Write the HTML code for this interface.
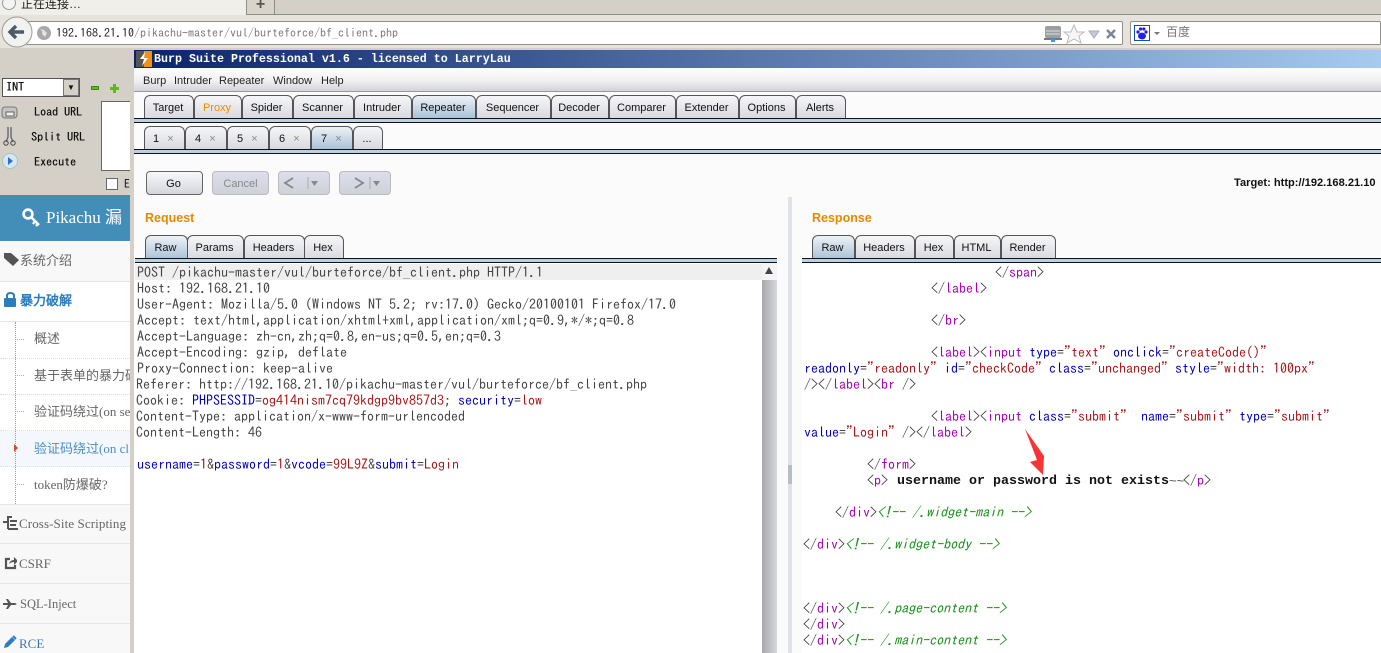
<!DOCTYPE html>
<html><head><meta charset="utf-8"><style>
html,body{margin:0;padding:0;width:1381px;height:653px;overflow:hidden;background:#d4d0c8}
body{position:relative;font-family:"Liberation Sans","WenQuanYi Zen Hei",sans-serif}
div,span.a{box-sizing:border-box}
.a{position:absolute}
.t{position:absolute;white-space:pre;font:14px/16px "IPAGothic","Liberation Mono",monospace;color:#444}
.b{color:#0000c0}.r{color:#a81818}.m{color:#a400b8}.g{color:#149014;font-style:italic}
.k{color:#111;font:bold 13.33px/16px "Liberation Mono",monospace}
.tab{position:absolute;top:0;height:100%;border:1px solid #555;border-bottom:0;border-radius:6px 6px 0 0;background:linear-gradient(#f6f6f8,#d8dae0);font-size:11px;color:#111;text-align:center;padding-right:2px}
.sel{background:linear-gradient(#eef2f6,#a9c2d8)}
.btn{position:absolute;top:171px;height:24px;border-radius:4px;font-size:11px;text-align:center;line-height:24px}
.s{position:absolute;left:0;width:130px;font:13px/38px "Liberation Serif","WenQuanYi Zen Hei",serif;color:#666;white-space:nowrap;overflow:hidden}
.h{font:12px/14px "IPAGothic","Liberation Mono",monospace;color:#111;position:absolute;white-space:pre;text-shadow:.3px 0 0 #111}
.d{position:absolute;left:17px;width:7px;height:1px;border-top:1px dotted #9db6d0;z-index:3}
</style></head><body>

<!-- browser top -->
<div class="a" style="left:0;top:0;width:1381px;height:15px;background:#d4d0c8;border-bottom:1px solid #8e8e88"></div>
<div class="a" style="left:0;top:0;width:246px;height:15px;background:#f1efe9"></div>
<div class="a" style="left:2px;top:-4px;width:14px;height:14px;border:1px solid #999;border-radius:50%;background:#f4f4f4"></div>
<div class="a" style="left:21px;top:-3px;font-size:12px;line-height:14px;color:#222">正在连接…</div>
<div class="a" style="left:246px;top:0;width:29px;height:15px;background:#d8d4ca;border:1px solid #8e8e88;border-top:0;text-align:center;font:bold 16px/9px 'Liberation Sans';color:#555">+</div>
<div class="a" style="left:0;top:15px;width:1381px;height:33px;background:#e6e3dc"></div>
<div class="a" style="left:26px;top:21px;width:1097px;height:24px;background:#fff;border:1px solid #8f8f8b;border-radius:2px"></div>
<svg class="a" style="left:1px;top:16px" width="34" height="34"><circle cx="16" cy="16" r="15" fill="#f2f2f0" stroke="#9a9a98"/><path d="M9 16h14M15 10l-6 6 6 6" fill="none" stroke="#4c5a6a" stroke-width="3.4"/></svg>
<svg class="a" style="left:37px;top:26px" width="14" height="14"><circle cx="7" cy="7" r="7" fill="#a8a8a8"/><path d="M3 3q3 2 2 5l3 3 2-4-3-3zM9 1l3 4" fill="#e4e4e4"/></svg>
<div class="t" style="left:56px;top:25px;font-size:12px;color:#222">192.168.21.10<span style="color:#777">/pikachu-master/vul/burteforce/bf_client.php</span></div>
<svg class="a" style="left:1044px;top:24px" width="80" height="20"><rect x="1" y="2" width="16" height="12" rx="2" fill="#9aa0a0"/><path d="M2 7h14M2 10h14" stroke="#dde"/><rect x="0" y="14" width="18" height="2" fill="#778"/><rect x="7" y="15" width="4" height="3" fill="#39f"/><path d="M30 1l3 7h7l-5 4 2 7-7-4-7 4 2-7-5-4h7z" fill="#f6f6f6" stroke="#bbb"/><path d="M45 7h10l-5 7z" fill="#c0ccd8" stroke="#aab"/><path d="M63 6l8 8M71 6l-8 8" stroke="#7a8694" stroke-width="2.4"/></svg>
<div class="a" style="left:1130px;top:21px;width:251px;height:24px;background:#fff;border:1px solid #8f8f8b;border-radius:2px"></div>
<svg class="a" style="left:1134px;top:25px" width="32" height="16"><rect x=".5" y=".5" width="15" height="15" fill="#fff" stroke="#0a50c0"/><ellipse cx="8" cy="11" rx="4" ry="3.4" fill="#2020e0"/><circle cx="4" cy="7" r="1.6" fill="#2020e0"/><circle cx="12" cy="7" r="1.6" fill="#2020e0"/><circle cx="6.5" cy="4" r="1.6" fill="#2020e0"/><circle cx="9.8" cy="4" r="1.6" fill="#2020e0"/><path d="M20 7h6l-3 3z" fill="#777"/></svg>
<div class="a" style="left:1166px;top:25px;font-size:12px;line-height:15px;color:#777">百度</div>

<!-- hackbar -->
<div class="a" style="left:2px;top:78px;width:78px;height:19px;background:#fff;border:1px solid #555;font:12px/17px 'IPAGothic',monospace;padding-left:3px;color:#111;text-shadow:.3px 0 0 #111">INT</div>
<div class="a" style="left:63px;top:79px;width:16px;height:17px;background:#d4d0c8;border:1px solid #777;font-size:8px;line-height:15px;text-align:center;color:#111">▼</div>
<div class="a" style="left:91px;top:86px;width:8px;height:4px;background:#5fb81c;border:1px solid #3e8a10"></div>
<div class="a" style="left:110px;top:87px;width:9px;height:3px;background:#5fb81c"></div><div class="a" style="left:113px;top:84px;width:3px;height:9px;background:#5fb81c"></div>
<svg class="a" style="left:1px;top:103px" width="18" height="70"><rect x="1" y="4" width="15" height="11" rx="3" fill="#c4c4c4" stroke="#777"/><rect x="5" y="9" width="8" height="4" fill="#eee" stroke="#666"/><path d="M7 24v10l-2 5M10 24v10l2 5" stroke="#667" fill="none" stroke-width="1.4"/><circle cx="5" cy="40" r="2.2" fill="none" stroke="#444"/><circle cx="12" cy="40" r="2.2" fill="none" stroke="#444"/><circle cx="9" cy="58" r="7.5" fill="#dbe6f4" stroke="#9cb"/><path d="M7 54l5 4-5 4z" fill="#2c70c8"/></svg>
<div class="h" style="left:34px;top:105px">Load URL</div>
<div class="h" style="left:31px;top:130px">Split URL</div>
<div class="h" style="left:34px;top:155px">Execute</div>
<div class="a" style="left:101px;top:101px;width:31px;height:70px;background:#fff;border:1px solid #666;border-right:0"></div>
<div class="a" style="left:106px;top:178px;width:12px;height:12px;background:#fff;border:1px solid #666"></div>
<div class="a" style="left:124px;top:177px;font:12px/14px 'IPAGothic',monospace;color:#111">E</div>

<!-- sidebar -->
<div class="a" style="left:0;top:195px;width:130px;height:458px;background:#fff"></div>
<div class="a" style="left:0;top:195px;width:130px;height:46px;background:#438eb9;color:#fff;font:17px/46px 'Liberation Serif','WenQuanYi Zen Hei',serif;padding-left:46px;white-space:nowrap;overflow:hidden">Pikachu 漏</div>
<svg class="a" style="left:21px;top:207px" width="20" height="20"><circle cx="7" cy="7" r="4.4" fill="none" stroke="#fff" stroke-width="2.6"/><path d="M10 10l8 8M14 14l-2 3M17 17l-2 2" stroke="#fff" stroke-width="2.4"/></svg>
<div class="s" style="top:242px;height:40px;background:#f8f8f8;border-bottom:1px solid #e5e5e5;padding-left:20px;line-height:38px">系统介绍</div>
<svg class="a" style="left:3px;top:252px" width="18" height="15"><path d="M1 1h7l8 7-6 6-9-8z" fill="#555"/></svg>
<div class="s" style="top:282px;height:40px;background:#fff;border-bottom:1px solid #e5e5e5;padding-left:20px;line-height:38px;color:#2b7dbc;font-weight:bold">暴力破解</div>
<svg class="a" style="left:4px;top:292px" width="13" height="15"><path d="M3 7V4q0-3 3.500-3T10 4v3" fill="none" stroke="#2b7dbc" stroke-width="2"/><rect x="0" y="6" width="12" height="9" rx="1" fill="#2b7dbc"/></svg>
<div class="a" style="left:15px;top:322px;width:1px;height:182px;border-left:1px dotted #7f9fc4;z-index:3"></div>
<div class="d" style="top:339px"></div><div class="d" style="top:375px"></div><div class="d" style="top:411px"></div><div class="d" style="top:484px"></div>
<div class="s" style="top:322px;height:37px;padding-left:34px;line-height:33px;border-bottom:1px dotted #ddd">概述</div>
<div class="s" style="top:359px;height:36px;padding-left:34px;line-height:34px;border-bottom:1px dotted #ddd">基于表单的暴力破</div>
<div class="s" style="top:395px;height:36px;padding-left:34px;line-height:33px;border-bottom:1px dotted #ddd">验证码绕过(on se</div>
<div class="s" style="top:431px;height:36px;padding-left:34px;line-height:36px;border-bottom:1px dotted #ddd;background:#f4f7fb;color:#4a8fc4">验证码绕过(on cl</div>
<div class="s" style="top:467px;height:37px;padding-left:34px;line-height:35px">token防爆破?</div>
<div class="a" style="left:14px;top:444px;border-left:4px solid #c8502a;border-top:4px solid transparent;border-bottom:4px solid transparent;z-index:4"></div>
<div class="s" style="top:504px;height:40px;background:#f8f8f8;border-top:1px solid #e5e5e5;border-bottom:1px solid #e5e5e5;padding-left:19px;line-height:37px;font-size:13px;letter-spacing:.1px">Cross-Site Scripting</div>
<svg class="a" style="left:3px;top:516px" width="15" height="14"><path d="M0 6h4M5 0v13M5 1h4M7 5h7M7 9h6M5 13h11" stroke="#555" stroke-width="2"/></svg>
<div class="s" style="top:544px;height:40px;background:#f8f8f8;border-bottom:1px solid #e5e5e5;padding-left:19px;line-height:39px">CSRF</div>
<svg class="a" style="left:4px;top:556px" width="13" height="14"><path d="M6 3H2v9h9V9" fill="none" stroke="#555" stroke-width="2.200"/><path d="M5 8q1-4 5-4V1l4 4-4 4V6q-3 0-5 2z" fill="#555"/></svg>
<div class="s" style="top:584px;height:40px;background:#f8f8f8;border-bottom:1px solid #e5e5e5;padding-left:20px;line-height:41px;font-size:12.500px">SQL-Inject</div>
<svg class="a" style="left:3px;top:598px" width="15" height="11"><path d="M0 5h2l3 0-2-4h2l3 4h4l2 1-2 1H8l-3 4H3l2-4H0z" fill="#555"/></svg>
<div class="s" style="top:624px;height:29px;background:#f8f8f8;padding-left:19px;line-height:39px;color:#3a78b0">RCE</div>
<svg class="a" style="left:3px;top:635px" width="14" height="14"><path d="M1 13l1-4 7-7 3 3-7 7z" fill="#2b7dbc"/><path d="M10 1l3 3" stroke="#2b7dbc" stroke-width="2"/></svg>

<!-- Burp window -->
<div class="a" style="left:130px;top:48px;width:1251px;height:605px;background:#d4d0c8"></div>
<div class="a" style="left:134px;top:50px;width:1247px;height:603px;background:#fbfbfc"></div>
<div class="a" style="left:134px;top:50px;width:1247px;height:18px;background:linear-gradient(90deg,#0a246a,#a6caf0)"></div>
<svg class="a" style="left:136px;top:51px" width="16" height="16"><rect width="8" height="16" fill="#555"/><rect x="8" width="8" height="16" fill="#f39019"/><path d="M9 1L4 8h4l-2 7 6-8H8z" fill="#fff"/></svg>
<div class="a" style="left:154px;top:52px;font:bold 11.67px/14px 'Liberation Mono',monospace;color:#fff;white-space:pre">Burp Suite Professional v1.6 - licensed to LarryLau</div>
<div class="a" style="left:134px;top:69px;width:1247px;height:23px;background:linear-gradient(#fcfcfc,#f2f2f4 50%,#d2d4da);border-bottom:1px solid #999"></div>
<div class="a" style="left:143px;top:74px;font-size:11px;line-height:15px;color:#222;white-space:pre">Burp</div>
<div class="a" style="left:174px;top:74px;font-size:11px;line-height:15px;color:#222">Intruder</div>
<div class="a" style="left:219px;top:74px;font-size:11px;line-height:15px;color:#222">Repeater</div>
<div class="a" style="left:273px;top:74px;font-size:11px;line-height:15px;color:#222">Window</div>
<div class="a" style="left:321px;top:74px;font-size:11px;line-height:15px;color:#222">Help</div>

<div class="a" style="left:134px;top:95px;width:1247px;height:23px;font-size:11px;line-height:24px">
<div class="tab" style="left:10px;width:50px">Target</div>
<div class="tab" style="left:60px;width:48px;color:#f08a00">Proxy</div>
<div class="tab" style="left:108px;width:51px">Spider</div>
<div class="tab" style="left:159px;width:61px">Scanner</div>
<div class="tab" style="left:220px;width:58px">Intruder</div>
<div class="tab sel" style="left:278px;width:64px">Repeater</div>
<div class="tab" style="left:342px;width:75px">Sequencer</div>
<div class="tab" style="left:417px;width:58px">Decoder</div>
<div class="tab" style="left:475px;width:67px">Comparer</div>
<div class="tab" style="left:542px;width:63px">Extender</div>
<div class="tab" style="left:605px;width:57px">Options</div>
<div class="tab" style="left:662px;width:50px">Alerts</div>
</div>
<div class="a" style="left:134px;top:118px;width:1247px;height:5px;background:#bcd0e4;border-top:1px solid #111;border-bottom:1px solid #111"></div>

<div class="a" style="left:134px;top:126px;width:1247px;height:23px;font-size:11px;line-height:24px">
<div class="tab" style="left:10px;width:41px;text-align:left;padding-left:8px">1 <span style="color:#888;margin-left:5px">×</span></div>
<div class="tab" style="left:51px;width:42px;text-align:left;padding-left:9px">4 <span style="color:#888;margin-left:5px">×</span></div>
<div class="tab" style="left:93px;width:42px;text-align:left;padding-left:9px">5 <span style="color:#888;margin-left:5px">×</span></div>
<div class="tab" style="left:135px;width:42px;text-align:left;padding-left:9px">6 <span style="color:#888;margin-left:5px">×</span></div>
<div class="tab sel" style="left:177px;width:42px;text-align:left;padding-left:9px">7 <span style="color:#888;margin-left:5px">×</span></div>
<div class="tab" style="left:219px;width:30px">...</div>
</div>
<div class="a" style="left:134px;top:149px;width:1247px;height:5px;background:#bcd0e4;border-top:1px solid #111;border-bottom:1px solid #111"></div>

<div class="btn" style="left:146px;width:57px;border:1px solid #666;background:linear-gradient(#f8f8fa,#d4d6dc);color:#111;padding-right:2px">Go</div>
<div class="btn" style="left:212px;width:57px;border:1px solid #bbb;background:linear-gradient(#dde,#cfd2d8);color:#888">Cancel</div>
<div class="btn" style="left:278px;width:52px;border:1px solid #bbb;background:linear-gradient(#dde,#cfd2d8);color:#888"></div>
<div class="btn" style="left:339px;width:52px;border:1px solid #bbb;background:linear-gradient(#dde,#cfd2d8);color:#888"></div>
<svg class="a" style="left:278px;top:171px" width="113" height="24"><path d="M12 7l-8 5 8 5M74 7l8 5-8 5" transform="translate(3 0)" fill="none" stroke="#888" stroke-width="1.800"/><path d="M30 6v12M92 6v12" stroke="#aaa"/><path d="M33 10h7l-3.500 5zM95 10h7l-3.500 5z" fill="#888"/></svg>
<div class="a" style="left:1234px;top:176px;font:bold 11.1px/14px 'Liberation Sans';color:#111;white-space:pre">Target: http://192.168.21.10</div>

<div class="a" style="left:145px;top:210px;font:bold 12.500px/16px 'Liberation Sans';color:#e58a00">Request</div>
<div class="a" style="left:812px;top:210px;font:bold 12.500px/16px 'Liberation Sans';color:#e58a00">Response</div>

<div class="a" style="left:134px;top:235px;width:643px;height:24px;line-height:24px">
<div class="tab sel" style="left:11px;width:43px">Raw</div>
<div class="tab" style="left:53px;width:57px">Params</div>
<div class="tab" style="left:110px;width:61px">Headers</div>
<div class="tab" style="left:170px;width:40px">Hex</div>
</div>
<div class="a" style="left:135px;top:258px;width:642px;height:5px;background:#bcd0e4;border-top:1px solid #111;border-bottom:1px solid #111"></div>
<div class="a" style="left:802px;top:235px;width:579px;height:24px;line-height:24px">
<div class="tab sel" style="left:10px;width:43px">Raw</div>
<div class="tab" style="left:53px;width:60px">Headers</div>
<div class="tab" style="left:113px;width:39px">Hex</div>
<div class="tab" style="left:152px;width:47px">HTML</div>
<div class="tab" style="left:199px;width:55px">Render</div>
</div>
<div class="a" style="left:802px;top:258px;width:579px;height:5px;background:#bcd0e4;border-top:1px solid #111;border-bottom:1px solid #111"></div>

<!-- Request editor -->
<div class="a" style="left:135px;top:263px;width:627px;height:390px;background:#fff"></div>
<div class="a" style="left:135px;top:264px;width:627px;height:16px;background:#efefef"></div>
<div class="a" style="left:762px;top:263px;width:15px;height:390px;background:linear-gradient(90deg,#a6a8ae,#d6d8dc)"></div>
<div class="a" style="left:762px;top:263px;width:15px;height:17px;background:#f4f4f6"></div>
<div class="a" style="left:765px;top:267px;border-left:4px solid transparent;border-right:4px solid transparent;border-bottom:7px solid #444"></div>
<div class="a" style="left:788px;top:197px;width:4px;height:456px;background:#dfe2ea"></div>
<div class="a" style="left:788px;top:465px;width:4px;height:19px;background:#b8bcc4"></div>
<div class="a" style="left:802px;top:263px;width:579px;height:390px;background:#fff"></div>

<div class="t" style="left:137px;top:264px">POST /pikachu-master/vul/burteforce/bf_client.php HTTP/1.1</div>
<div class="t" style="left:137px;top:280px">Host: 192.168.21.10</div>
<div class="t" style="left:137px;top:296px">User-Agent: Mozilla/5.0 (Windows NT 5.2; rv:17.0) Gecko/20100101 Firefox/17.0</div>
<div class="t" style="left:137px;top:312px">Accept: text/html,application/xhtml+xml,application/xml;q=0.9,*/*;q=0.8</div>
<div class="t" style="left:137px;top:328px">Accept-Language: zh-cn,zh;q=0.8,en-us;q=0.5,en;q=0.3</div>
<div class="t" style="left:137px;top:344px">Accept-Encoding: gzip, deflate</div>
<div class="t" style="left:137px;top:360px">Proxy-Connection: keep-alive</div>
<div class="t" style="left:136px;top:376px">Referer: http://192.168.21.10/pikachu-master/vul/burteforce/bf_client.php</div>
<div class="t" style="left:136px;top:392px">Cookie: <span class="b">PHPSESSID</span>=<span class="r">og414nism7cq79kdgp9bv857d3</span>; <span class="b">security</span>=<span class="r">low</span></div>
<div class="t" style="left:136px;top:408px">Content-Type: application/x-www-form-urlencoded</div>
<div class="t" style="left:136px;top:424px">Content-Length: 46</div>
<div class="t" style="left:137px;top:456px"><span class="b">username</span>=<span class="r">1</span>&amp;<span class="b">password</span>=<span class="r">1</span>&amp;<span class="b">vcode</span>=<span class="r">99L9Z</span>&amp;<span class="b">submit</span>=<span class="r">Login</span></div>

<!-- Response -->
<div class="t" style="left:995px;top:264px">&lt;/<span class="m">span</span>&gt;</div>
<div class="t" style="left:931px;top:280px">&lt;/<span class="m">label</span>&gt;</div>
<div class="t" style="left:931px;top:312px">&lt;/<span class="m">br</span>&gt;</div>
<div class="t" style="left:931px;top:344px">&lt;<span class="m">label</span>&gt;&lt;<span class="m">input</span> <span class="b">type</span>=<span class="r">"text"</span> <span class="b">onclick</span>=<span class="r">"createCode()"</span></div>
<div class="t" style="left:804px;top:360px"><span class="b">readonly</span>=<span class="r">"readonly"</span> <span class="b">id</span>=<span class="r">"checkCode"</span> <span class="b">class</span>=<span class="r">"unchanged"</span> <span class="b">style</span>=<span class="r">"width: 100px"</span></div>
<div class="t" style="left:804px;top:376px">/&gt;&lt;/<span class="m">label</span>&gt;&lt;<span class="m">br</span> /&gt;</div>
<div class="t" style="left:931px;top:408px">&lt;<span class="m">label</span>&gt;&lt;<span class="m">input</span> <span class="b">class</span>=<span class="r">"submit"</span>  <span class="b">name</span>=<span class="r">"submit"</span> <span class="b">type</span>=<span class="r">"submit"</span></div>
<div class="t" style="left:804px;top:424px"><span class="b">value</span>=<span class="r">"Login"</span> /&gt;&lt;/<span class="m">label</span>&gt;</div>
<div class="t" style="left:867px;top:456px">&lt;/<span class="m">form</span>&gt;</div>
<div class="t" style="left:867px;top:472px">&lt;<span class="m">p</span>&gt;</div>
<div class="t k" style="left:897px;top:474px">username or password is not exists</div>
<div class="t" style="left:1169px;top:474px;font:13px/16px 'Liberation Mono',monospace;letter-spacing:-.3px;color:#555">~~</div>
<div class="t" style="left:1183px;top:472px">&lt;/<span class="m">p</span>&gt;</div>
<div class="t" style="left:835px;top:504px">&lt;/<span class="m">div</span>&gt;<span class="g">&lt;!-- /.widget-main --&gt;</span></div>
<div class="t" style="left:803px;top:536px">&lt;/<span class="m">div</span>&gt;<span class="g">&lt;!-- /.widget-body --&gt;</span></div>
<div class="t" style="left:803px;top:600px">&lt;/<span class="m">div</span>&gt;<span class="g">&lt;!-- /.page-content --&gt;</span></div>
<div class="t" style="left:803px;top:616px">&lt;/<span class="m">div</span>&gt;</div>
<div class="t" style="left:803px;top:632px">&lt;/<span class="m">div</span>&gt;<span class="g">&lt;!-- /.main-content --&gt;</span></div>

<svg class="a" style="left:1020px;top:425px" width="32" height="55"><path d="M5 4L24 31 23 50 10 37 17 35z" fill="#f83434"/></svg>
</body></html>
